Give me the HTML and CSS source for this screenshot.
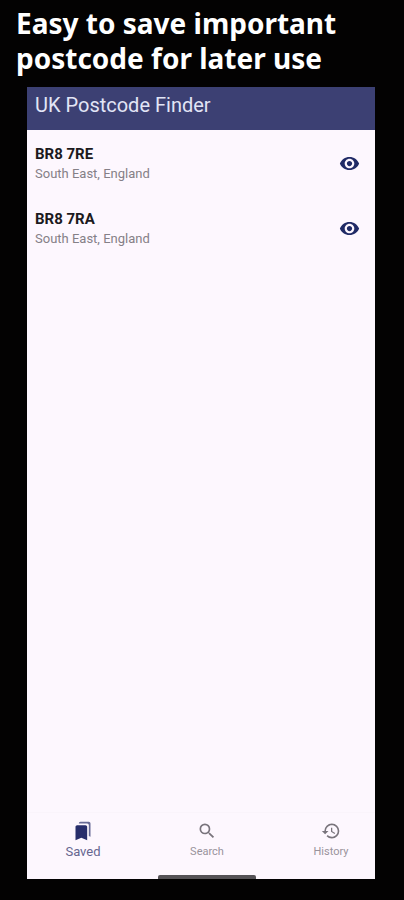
FILE: index.html
```
<!DOCTYPE html>
<html lang="en">
<head>
<meta charset="utf-8">
<meta name="viewport" content="width=device-width, initial-scale=1">
<title>UK Postcode Finder</title>
<link rel="stylesheet" href="styles.css">
</head>
<body>
<h1 class="headline">Easy to save important<br>postcode for later use</h1>
<div class="phone">
  <header class="app-bar"><h2 class="app-title">UK Postcode Finder</h2></header>
  <main class="content">
    <ul class="list">
      <li class="row">
        <div>
          <h3 class="code">BR8 7RE</h3>
          <p class="region">South East, England</p>
        </div>
        <button class="view" type="button" aria-label="View BR8 7RE">
          <svg class="eye" viewBox="0 0 24 24"><path d="M12 4.5C7 4.5 2.73 7.61 1 12c1.73 4.39 6 7.5 11 7.5s9.27-3.11 11-7.5c-1.73-4.39-6-7.5-11-7.5zM12 17.5c-3 0-5.500-2.500-5.500-5.500s2.500-5.500 5.500-5.500 5.500 2.500 5.500 5.500-2.500 5.500-5.500 5.500zm0-8.500c-1.660 0-3 1.340-3 3s1.340 3 3 3 3-1.340 3-3-1.340-3-3-3z"/></svg>
        </button>
      </li>
      <li class="row">
        <div>
          <h3 class="code">BR8 7RA</h3>
          <p class="region">South East, England</p>
        </div>
        <button class="view" type="button" aria-label="View BR8 7RA">
          <svg class="eye" viewBox="0 0 24 24"><path d="M12 4.5C7 4.5 2.73 7.61 1 12c1.73 4.39 6 7.5 11 7.5s9.27-3.11 11-7.5c-1.73-4.39-6-7.5-11-7.5zM12 17.5c-3 0-5.500-2.500-5.500-5.500s2.500-5.500 5.500-5.500 5.500 2.500 5.500 5.500-2.500 5.500-5.500 5.500zm0-8.500c-1.660 0-3 1.340-3 3s1.340 3 3 3 3-1.340 3-3-1.340-3-3-3z"/></svg>
        </button>
      </li>
    </ul>
  </main>
  <nav class="tabs">
    <a class="tab tab-active" href="#saved" aria-current="page">
      <svg class="tab-icon" viewBox="0 0 24 24"><path class="back-page" d="M19 18l2 1V3c0-1.100-.9-2-2-2H8.990C7.890 1 7 1.900 7 3h10c1.100 0 2 .9 2 2v13z"/><path d="M15 5H5c-1.100 0-2 .9-2 2v16l7-3 7 3V7c0-1.100-.9-2-2-2z"/></svg>
      <span>Saved</span>
    </a>
    <a class="tab" href="#search">
      <svg class="tab-icon" viewBox="0 0 24 24"><path d="M15.500 14h-.79l-.28-.27A6.471 6.471 0 0 0 16 9.500 6.500 6.500 0 1 0 9.500 16c1.610 0 3.090-.59 4.230-1.570l.27.28v.79l5 4.990L20.490 19l-4.990-5zm-6 0C7.010 14 5 11.990 5 9.500S7.010 5 9.500 5 14 7.010 14 9.500 11.990 14 9.500 14z"/></svg>
      <span>Search</span>
    </a>
    <a class="tab" href="#history">
      <svg class="tab-icon" viewBox="0 0 24 24"><path d="M13 3a9 9 0 0 0-9 9H1l3.890 3.890.07.14L9 12H6c0-3.870 3.130-7 7-7s7 3.130 7 7-3.130 7-7 7c-1.930 0-3.680-.79-4.940-2.060l-1.420 1.420A8.954 8.954 0 0 0 13 21a9 9 0 0 0 0-18zm-1 5v5l4.280 2.540.72-1.210-3.500-2.080V8H12z"/></svg>
      <span>History</span>
    </a>
  </nav>
  <div class="home-bar"></div>
</div>
</body>
</html>
```
FILE: styles.css
```
* {
  box-sizing: border-box;
  margin: 0;
  padding: 0;
}

body {
  display: flex;
  flex-direction: column;
  min-height: 100vh;
  padding: 6px 29px 21px 27px;
  background: #030202;
  font-family: Roboto, "Liberation Sans", sans-serif;
}

.headline {
  margin: 0 -24px 11px -11px;
  color: #fff;
  font: 700 28px/35px "Noto Sans", sans-serif;
}

.phone {
  display: flex;
  flex: 1;
  flex-direction: column;
  background: #fdf7fe;
}

.app-bar {
  height: 43px;
  padding: 6px 8px;
  background: #3c4073;
}

.app-title {
  color: #e2e5f6;
  font-size: 20px;
  font-weight: 400;
  line-height: 24px;
}

.content {
  flex: 1;
}

.list {
  padding-top: 1px;
  list-style: none;
}

.row {
  display: flex;
  align-items: center;
  justify-content: space-between;
  height: 65px;
  padding: 0 15px 0 8px;
}

.code {
  color: #1c1a20;
  font-size: 15px;
  font-weight: 700;
  line-height: 20px;
}

.region {
  color: #858087;
  font-size: 13px;
  line-height: 20px;
}

.view {
  display: flex;
  border: 0;
  background: none;
}

.eye {
  width: 21px;
  height: 21px;
  fill: #202a66;
}

.tabs {
  display: flex;
  justify-content: space-between;
  padding: 8px 20px 0 32px;
  border-top: 1px solid #faf4fb;
}

.tab {
  display: flex;
  flex-direction: column;
  align-items: center;
  gap: 4px;
  width: 48px;
  height: 54px;
  color: #99939c;
  font-size: 11px;
  line-height: 14px;
  text-decoration: none;
}

.tab-active {
  color: #666690;
  font-size: 13px;
}

.tab-icon {
  width: 20px;
  height: 20px;
  fill: #79747c;
}

.tab-active .tab-icon {
  fill: #272d6b;
}

.tab-active .back-page {
  fill: #686b96;
}

.home-bar {
  width: 98px;
  height: 4px;
  margin-left: 131px;
  border-radius: 2px 2px 0 0;
  background: #555256;
}
```
